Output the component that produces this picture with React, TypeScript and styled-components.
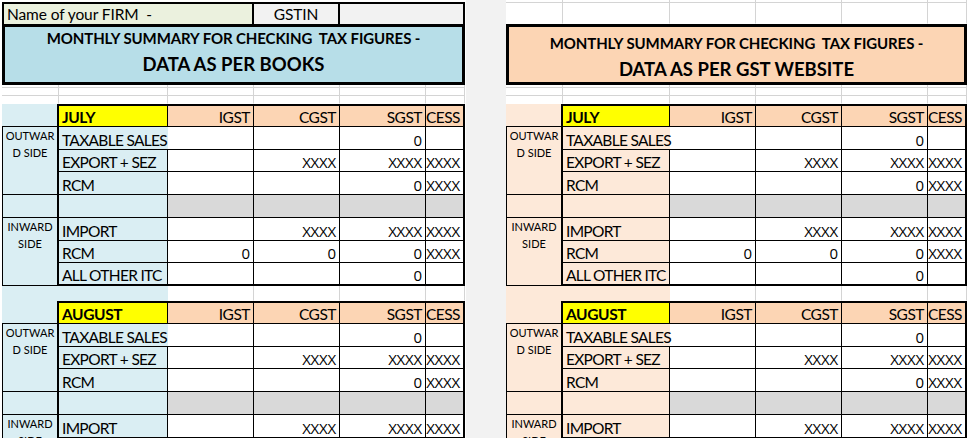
import React from "react";
import styled, { createGlobalStyle } from "styled-components";

const GRID = "#d4d4d4";
const FONT = `Lato, "Liberation Sans", Arial, sans-serif`;
const FIGURE_FONT = `"Open Sans", Lato, "Liberation Sans", sans-serif`;

const GlobalStyle = createGlobalStyle`
  html, body { margin: 0; padding: 0; background: #ffffff; }
  body { font-family: ${FONT}; color: #000000; }
  *, *::before, *::after { box-sizing: border-box; }
`;

interface Palette {
  title: string;
  side: string;
  head: string;
}

const BOOKS: Palette = { title: "#b7dee8", side: "#daeef3", head: "#fcd5b4" };
const WEBSITE: Palette = { title: "#fcd5b4", side: "#fde9d9", head: "#fcd5b4" };

interface RowData {
  label: string;
  values: string[];
}

const OUTWARD: RowData[] = [
  { label: "TAXABLE SALES", values: ["", "", "0", ""] },
  { label: "EXPORT + SEZ", values: ["", "XXXX", "XXXX", "XXXX"] },
  { label: "RCM", values: ["", "", "0", "XXXX"] },
];

const INWARD: RowData[] = [
  { label: "IMPORT", values: ["", "XXXX", "XXXX", "XXXX"] },
  { label: "RCM", values: ["0", "0", "0", "XXXX"] },
  { label: "ALL OTHER ITC", values: ["", "", "0", ""] },
];

const TAXES = ["IGST", "CGST", "SGST", "CESS"];

/* ---------- page frame ---------- */

const Page = styled.div`
  display: flex;
  width: 968px;
  height: 438px;
  overflow: hidden;
  background: #ffffff;
`;

const Sheet = styled.div<{ $pl: number; $w: number }>`
  flex: none;
  display: flex;
  flex-direction: column;
  width: ${(p) => p.$pl + p.$w + 1}px;
  padding-left: ${(p) => p.$pl}px;
  padding-right: 1px;
`;

const Divider = styled.div`
  flex: none;
  width: 40px;
  background: #f2f2f2;
`;

/* ---------- empty spreadsheet rows with gridlines ---------- */

const Strip = styled.div<{ $cols: string; $h: number }>`
  flex: none;
  display: grid;
  grid-template-columns: ${(p) => p.$cols};
  height: ${(p) => p.$h}px;
`;

const StripCell = styled.div<{ $fill?: string; $line?: boolean }>`
  background: ${(p) => p.$fill ?? "#ffffff"};
  border-right: 1px solid ${(p) => p.$fill ?? GRID};
  border-bottom: 1px solid ${(p) => (p.$line ? GRID : p.$fill ?? "#ffffff")};
`;

/* ---------- firm name row ---------- */

const NameRow = styled.div`
  flex: none;
  display: grid;
  grid-template-columns: 252px 86px 125px;
  height: 22px;
`;

const NameBox = styled.div<{ $bg: string; $first?: boolean; $center?: boolean }>`
  display: flex;
  align-items: center;
  justify-content: ${(p) => (p.$center ? "center" : "flex-start")};
  padding-left: ${(p) => (p.$first ? 3 : 0)}px;
  background: ${(p) => p.$bg};
  border: 2px solid #000000;
  border-bottom: none;
  border-left-width: ${(p) => (p.$first ? 2 : 0)}px;
  font-size: 15.5px;
  line-height: 18px;
  letter-spacing: -0.1px;
  white-space: pre;
`;

/* ---------- title banner ---------- */

const TitleBox = styled.div<{ $bg: string; $pt: number }>`
  flex: none;
  height: 61px;
  padding-top: ${(p) => p.$pt}px;
  background: ${(p) => p.$bg};
  border: 3px solid #000000;
  text-align: center;
  font-weight: 700;
  color: #000000;
`;

const TitleLine = styled.div<{ $size: number; $lh: number; $ls: number }>`
  font-size: ${(p) => p.$size}px;
  line-height: ${(p) => p.$lh}px;
  letter-spacing: ${(p) => p.$ls}px;
  white-space: pre;
`;

/* ---------- monthly table ---------- */

const Table = styled.div<{ $cols: string }>`
  flex: none;
  display: grid;
  grid-template-columns: ${(p) => p.$cols};
  grid-auto-rows: 22.75px;
  font-size: 15.5px;
  letter-spacing: -0.5px;
`;

const CellBase = styled.div`
  display: flex;
  align-items: flex-end;
  min-width: 0;
  line-height: 18px;
  white-space: nowrap;
  border: 0 solid #000000;
`;

const SideHead = styled(CellBase)<{ $bg: string }>`
  background: ${(p) => p.$bg};
  border-right-width: 2px;
  border-bottom-width: 1px;
`;

const SideGroup = styled(CellBase)<{ $bg: string; $rows: number }>`
  grid-row: span ${(p) => p.$rows};
  flex-direction: column;
  align-items: center;
  justify-content: flex-start;
  background: ${(p) => p.$bg};
  border-width: 0 2px 1px 1px;
  font-size: 11px;
  line-height: 17px;
  letter-spacing: 0;
  text-align: center;
  white-space: pre;
`;

const MonthCell = styled(CellBase)`
  padding-left: 3px;
  background: #ffff00;
  border-width: 2px 1px 1px 0;
  font-weight: 700;
  letter-spacing: -0.4px;
`;

const TaxHead = styled(CellBase)<{ $bg: string; $edge: boolean }>`
  justify-content: flex-end;
  padding-right: 3px;
  background: ${(p) => p.$bg};
  border-width: 2px ${(p) => (p.$edge ? 2 : 1)}px 1px 0;
`;

const Label = styled(CellBase)<{ $bg: string; $open?: boolean; $end?: boolean }>`
  position: relative;
  z-index: ${(p) => (p.$open ? 1 : 0)};
  padding-left: 3px;
  background: ${(p) => p.$bg};
  border-width: 0 ${(p) => (p.$open ? 0 : 1)}px ${(p) => (p.$end ? 2 : 1)}px 0;
  letter-spacing: -0.7px;
`;

const Num = styled(CellBase)<{ $edge: boolean; $end?: boolean }>`
  justify-content: flex-end;
  padding-right: 3px;
  background: #ffffff;
  border-width: 0 ${(p) => (p.$edge ? 2 : 1)}px ${(p) => (p.$end ? 2 : 1)}px 0;
  font-family: ${FIGURE_FONT};
  font-size: 15px;
  letter-spacing: -0.2px;
`;

const Shade = styled(CellBase)<{ $edge: boolean }>`
  background: #d9d9d9;
  border-width: 0 ${(p) => (p.$edge ? 2 : 1)}px 1px 0;
`;

/* ---------- components ---------- */

function GridStrip({
  cols,
  count,
  h,
  line,
  fills,
}: {
  cols: string;
  count: number;
  h: number;
  line?: boolean;
  fills?: (string | undefined)[];
}) {
  return (
    <Strip $cols={cols} $h={h}>
      {Array.from({ length: count }, (_, i) => (
        <StripCell key={i} $line={line} $fill={fills ? fills[i] : undefined} />
      ))}
    </Strip>
  );
}

function DataRows({ rows, palette, last }: { rows: RowData[]; palette: Palette; last: boolean }) {
  return (
    <>
      {rows.map((r, ri) => {
        const end = last && ri === rows.length - 1;
        return (
          <React.Fragment key={r.label + ri}>
            <Label $bg={palette.side} $open={r.label === "TAXABLE SALES"} $end={end}>
              {r.label}
            </Label>
            {r.values.map((v, vi) => (
              <Num key={vi} $edge={vi === 3} $end={end}>
                {v}
              </Num>
            ))}
          </React.Fragment>
        );
      })}
    </>
  );
}

function MonthTable({ month, cols, palette }: { month: string; cols: string; palette: Palette }) {
  return (
    <Table $cols={cols}>
      <SideHead $bg={palette.side} />
      <MonthCell>{month}</MonthCell>
      {TAXES.map((t, i) => (
        <TaxHead key={t} $bg={palette.head} $edge={i === 3}>
          {t}
        </TaxHead>
      ))}

      <SideGroup $bg={palette.side} $rows={3}>
        {"OUTWAR\nD SIDE"}
      </SideGroup>
      <DataRows rows={OUTWARD} palette={palette} last={false} />

      <SideGroup $bg={palette.side} $rows={1} />
      <Label $bg={palette.side} />
      {TAXES.map((t, i) => (
        <Shade key={t} $edge={i === 3} />
      ))}

      <SideGroup $bg={palette.side} $rows={3}>
        {"INWARD\nSIDE"}
      </SideGroup>
      <DataRows rows={INWARD} palette={palette} last />
    </Table>
  );
}

interface SheetSpec {
  pl: number;
  cols: number[];
  palette: Palette;
  heading: string;
  withName: boolean;
  titlePad: number;
  l1: number;
  l2: number;
}

function SummarySheet({ spec }: { spec: SheetSpec }) {
  const cols = spec.cols.map((c) => `${c}px`).join(" ");
  const width = spec.cols.reduce((a, b) => a + b, 0);
  const n = spec.cols.length;
  const sideFill = [spec.palette.side, spec.palette.side, undefined, undefined, undefined, undefined];
  return (
    <Sheet $pl={spec.pl} $w={width}>
      {spec.withName ? (
        <>
          <GridStrip cols={cols} count={n} h={2} fills={Array(n).fill("#ffffff")} />
          <NameRow>
            <NameBox $bg="#ebf1de" $first>
              {"Name of your FIRM  -"}
            </NameBox>
            <NameBox $bg="#f2f2f2" $center>
              GSTIN
            </NameBox>
            <NameBox $bg="#f2f2f2" />
          </NameRow>
        </>
      ) : (
        <>
          <GridStrip cols={cols} count={n} h={3} line />
          <GridStrip cols={cols} count={n} h={21} />
        </>
      )}
      <TitleBox $bg={spec.palette.title} $pt={spec.titlePad}>
        <TitleLine $size={15} $lh={spec.l1} $ls={-0.1}>
          {"MONTHLY SUMMARY FOR CHECKING  TAX FIGURES -"}
        </TitleLine>
        <TitleLine $size={18.5} $lh={spec.l2} $ls={0}>
          {spec.heading}
        </TitleLine>
      </TitleBox>
      <GridStrip cols={cols} count={n} h={3} line />
      <GridStrip cols={cols} count={n} h={8} line />
      <GridStrip cols={cols} count={n} h={8} />
      <MonthTable month="JULY" cols={cols} palette={spec.palette} />
      <GridStrip cols={cols} count={n} h={15} fills={sideFill} />
      <MonthTable month="AUGUST" cols={cols} palette={spec.palette} />
    </Sheet>
  );
}

const LEFT: SheetSpec = {
  pl: 2,
  cols: [57, 109, 86, 86, 86, 39],
  palette: BOOKS,
  heading: "DATA AS PER BOOKS",
  withName: true,
  titlePad: 0,
  l1: 22,
  l2: 30,
};

const RIGHT: SheetSpec = {
  pl: 0,
  cols: [57, 107, 86, 86, 86, 39],
  palette: WEBSITE,
  heading: "DATA AS PER GST WEBSITE",
  withName: false,
  titlePad: 4,
  l1: 24,
  l2: 28,
};

export default function App() {
  return (
    <>
      <GlobalStyle />
      <Page>
        <SummarySheet spec={LEFT} />
        <Divider />
        <SummarySheet spec={RIGHT} />
      </Page>
    </>
  );
}
